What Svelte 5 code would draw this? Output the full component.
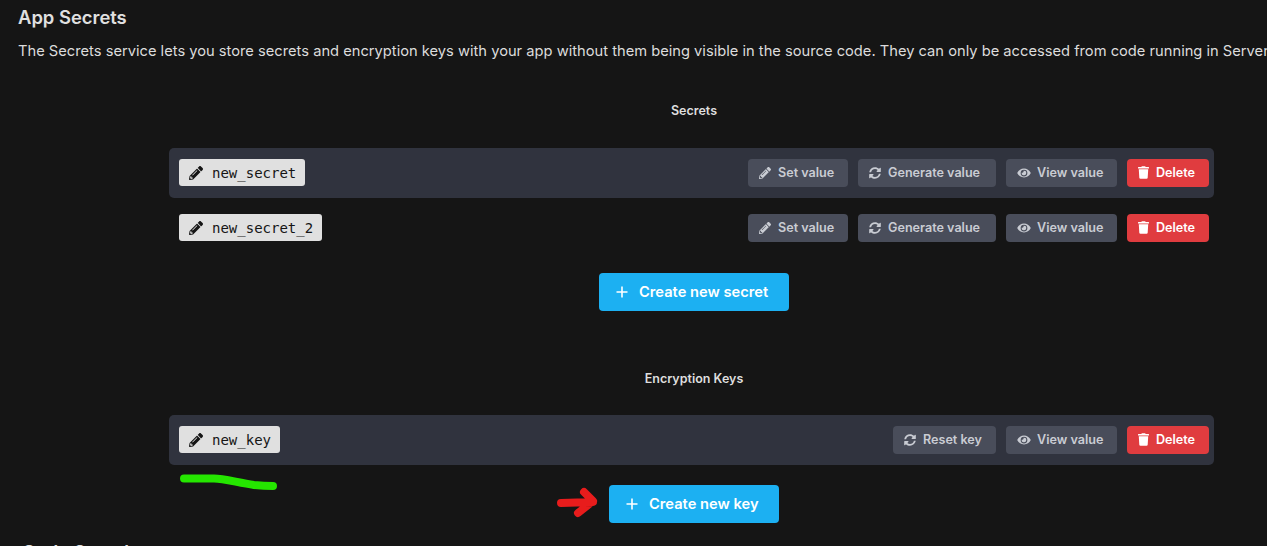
<script>
  const secrets = ['new_secret', 'new_secret_2'];
  const keys = ['new_key'];
</script>

{#snippet pencil()}
  <svg class="icon" viewBox="0 0 512 512"><path fill="currentColor" d="M497.9 142.1l-46.1 46.1c-4.7 4.7-12.3 4.7-17 0l-111-111c-4.7-4.7-4.7-12.3 0-17l46.1-46.1c18.7-18.7 49.1-18.7 67.9 0l60.1 60.1c18.8 18.7 18.8 49.1 0 67.9zM284.2 99.8L21.6 362.4.4 483.9c-2.9 16.4 11.4 30.6 27.8 27.8l121.5-21.3 262.6-262.6c4.7-4.7 4.7-12.3 0-17l-111-111c-4.8-4.7-12.4-4.7-17.1 0zM124.1 339.9c-5.5-5.5-5.5-14.3 0-19.8l154-154c5.5-5.5 14.3-5.5 19.8 0s5.5 14.3 0 19.8l-154 154c-5.5 5.5-14.3 5.5-19.8 0zM88 424h48v36.3l-64.5 11.3-31.1-31.1L51.7 376H88v48z"/></svg>
{/snippet}

{#snippet sync()}
  <svg class="icon" viewBox="0 0 512 512"><path fill="currentColor" d="M370.7 133.3C339.5 104 298.9 88 255.8 88c-77.5.1-144.3 53.2-162.8 126.9-1.3 5.4-6.1 9.1-11.6 9.1H24.1c-7.5 0-13.2-6.8-11.8-14.2C33.9 94.9 134.8 8 256 8c66.4 0 126.8 26.1 171.3 68.7L463 41c15.1-15.1 41-4.4 41 17v134c0 13.3-10.7 24-24 24H346c-21.4 0-32.1-25.9-17-41l41.7-41.7zM32 296h134c21.4 0 32.1 25.9 17 41l-41.7 41.7c31.2 29.3 71.8 45.3 114.9 45.3 77.4-.1 144.3-53.1 162.8-126.8 1.3-5.4 6.1-9.1 11.6-9.1h57.3c7.5 0 13.2 6.8 11.8 14.2C478.1 417.1 377.2 504 256 504c-66.4 0-126.8-26.1-171.3-68.7L49 471c-15.1 15.1-41 4.4-41-17V320c0-13.3 10.7-24 24-24z"/></svg>
{/snippet}

{#snippet eye()}
  <svg class="icon eye" viewBox="0 0 576 512"><path fill="currentColor" d="M572.5 241.4C518.3 135.6 410.9 64 288 64S57.7 135.6 3.5 241.4a32.4 32.4 0 0 0 0 29.2C57.7 376.4 165.1 448 288 448s230.3-71.6 284.5-177.4a32.4 32.4 0 0 0 0-29.2zM288 400a144 144 0 1 1 144-144 143.9 143.9 0 0 1-144 144zm0-240a95.3 95.3 0 0 0-25.3 3.8 47.9 47.9 0 0 1-66.9 66.9A95.8 95.8 0 1 0 288 160z"/></svg>
{/snippet}

{#snippet trash()}
  <svg class="icon trash" viewBox="0 0 448 512"><path fill="currentColor" d="M432 32H312l-9.4-18.7A24 24 0 0 0 281.1 0H166.8a23.7 23.7 0 0 0-21.4 13.3L136 32H16A16 16 0 0 0 0 48v32a16 16 0 0 0 16 16h416a16 16 0 0 0 16-16V48a16 16 0 0 0-16-16zM53.2 467a48 48 0 0 0 47.9 45h245.8a48 48 0 0 0 47.9-45L416 128H32z"/></svg>
{/snippet}

{#snippet plus()}
  <svg class="plus" width="12" height="12" viewBox="0 0 12 12"><path d="M6 .5v11M.5 6h11" fill="none" stroke="currentColor" stroke-width="1.6"/></svg>
{/snippet}

{#snippet nameTag(name)}
  <div class="tag">
    <span class="tagIcon">{@render pencil()}</span>
    <code>{name}</code>
  </div>
{/snippet}

<main class="page">
  <h1>App Secrets</h1>
  <p class="intro">The Secrets service lets you store secrets and encryption keys with your app without them being visible in the source code. They can only be accessed from code running in Server Scripts.</p>

  <section class="block secretsBlock">
    <h2>Secrets</h2>
    <div class="rows">
      {#each secrets as name, i}
        <div class="row" class:shaded={i === 0}>
          {@render nameTag(name)}
          <div class="actions">
            <button class="btn setBtn">{@render pencil()}Set value</button>
            <button class="btn genBtn">{@render sync()}Generate value</button>
            <button class="btn viewBtn">{@render eye()}View value</button>
            <button class="btn danger">{@render trash()}Delete</button>
          </div>
        </div>
      {/each}
    </div>
    <button class="create createSecret">{@render plus()}Create new secret</button>
  </section>

  <section class="block keysBlock">
    <h2>Encryption Keys</h2>
    <div class="rows">
      {#each keys as name}
        <div class="row shaded">
          {@render nameTag(name)}
          <div class="actions">
            <button class="btn resetBtn">{@render sync()}Reset key</button>
            <button class="btn viewBtn">{@render eye()}View value</button>
            <button class="btn danger">{@render trash()}Delete</button>
          </div>
        </div>
      {/each}
    </div>
    <div class="annotated">
      <svg class="scribble" width="110" height="22" viewBox="0 0 110 22">
        <path d="M5 4.5 H35 C45 4.5 60 9 75 11 C85 12 90 12 94 12" fill="none" stroke="#25e600" stroke-width="8" stroke-linecap="round"/>
      </svg>
      <svg class="arrow" width="46" height="40" viewBox="0 0 46 40">
        <path d="M6 18 L38 17 M29 7 L38 16 L23 28" fill="none" stroke="#e81c1c" stroke-width="8" stroke-linecap="round" stroke-linejoin="round"/>
      </svg>
      <button class="create createKey">{@render plus()}Create new key</button>
    </div>
  </section>

  <h1 class="nextHeading">Code Samples</h1>
</main>

<style>
  :global(body) {
    background: #151515;
    overflow: hidden;
  }

  .page {
    height: 546px;
    overflow: hidden;
    padding: 6px 0 0 18px;
    box-sizing: border-box;
    font-family: Inter, "Open Sans", sans-serif;
    color: #e0e0e0;
  }

  h1 {
    margin: 0;
    font-size: 18.4px;
    line-height: 22px;
    font-weight: 600;
  }

  .intro {
    margin: 13px 0 0;
    width: 1400px;
    font-size: 14.7px;
    line-height: 20px;
    white-space: nowrap;
    color: #dcdcdc;
  }

  .block {
    width: 1050px;
    margin-left: 151px;
    display: flex;
    flex-direction: column;
    align-items: center;
  }

  .secretsBlock {
    margin-top: 42px;
  }

  .keysBlock {
    margin-top: 60px;
  }

  h2 {
    margin: 0 0 29px;
    font-size: 12.5px;
    line-height: 16px;
    font-weight: 600;
    color: #dedede;
  }

  .keysBlock h2 {
    margin-bottom: 28px;
  }

  .rows {
    width: 1045px;
    align-self: flex-start;
    display: flex;
    flex-direction: column;
    gap: 5px;
  }

  .row {
    height: 50px;
    padding: 0 5px 0 10px;
    border-radius: 5px;
    display: flex;
    align-items: center;
    justify-content: space-between;
  }

  .shaded {
    background: #30333e;
  }

  .tag {
    height: 27px;
    margin-bottom: 1px;
    padding: 0 9px 0 10px;
    border-radius: 3px;
    background: #e0e0e0;
    color: #151515;
    display: flex;
    align-items: center;
    gap: 9px;
  }

  .tagIcon {
    display: flex;
  }

  .tagIcon .icon {
    width: 14px;
    height: 14px;
    margin: 0;
  }

  code {
    font-family: "DejaVu Sans Mono", monospace;
    font-size: 14px;
  }

  .actions {
    display: flex;
    gap: 10px;
  }

  .btn {
    height: 28px;
    padding: 0 0 1px 11px;
    border: none;
    border-radius: 4px;
    background: #494d5a;
    color: #c9ccd3;
    font: 600 12.6px Inter, "Open Sans", sans-serif;
    display: flex;
    align-items: center;
  }

  .setBtn {
    width: 100px;
  }

  .genBtn {
    width: 138px;
  }

  .viewBtn {
    width: 111px;
  }

  .resetBtn {
    width: 103px;
  }

  .danger {
    width: 82px;
    background: #e03c3f;
    color: #fff;
  }

  .icon {
    width: 12px;
    height: 12px;
    margin-right: 7px;
  }

  .eye {
    width: 14px;
    margin-right: 6px;
  }

  .trash {
    width: 11px;
    height: 13px;
    margin-right: 7px;
  }

  .create {
    height: 38px;
    padding: 0 0 1px 17px;
    border: none;
    border-radius: 4px;
    background: #1cb0f2;
    color: #fff;
    font: 600 14.7px Inter, "Open Sans", sans-serif;
    display: flex;
    align-items: center;
  }

  .createSecret {
    width: 190px;
    margin-top: 20px;
  }

  .createKey {
    width: 170px;
  }

  .plus {
    margin-right: 11px;
  }

  .annotated {
    margin-top: 20px;
    position: relative;
    display: flex;
    justify-content: center;
    width: 100%;
  }

  .scribble {
    position: absolute;
    left: 10px;
    top: -11px;
  }

  .arrow {
    position: absolute;
    left: 386px;
    top: 0;
  }

  .nextHeading {
    margin-top: 18px;
    padding-left: 4px;
  }
</style>
